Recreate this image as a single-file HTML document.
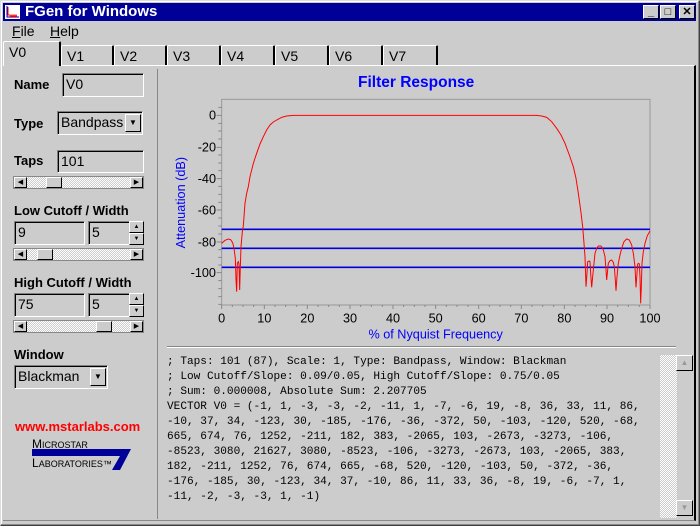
<!DOCTYPE html>
<html><head><style>
*{margin:0;padding:0;box-sizing:border-box}
body{width:700px;height:526px;background:#cccccc;position:relative;overflow:hidden;font-family:"Liberation Sans",sans-serif;font-size:13px;color:#000}
.a{position:absolute}
.win{left:0;top:0;width:700px;height:526px;border:1px solid #ddd;border-right-color:#404040;border-bottom-color:#404040;box-shadow:inset -1px -1px 0 #888,inset 1px 1px 0 #fff}
.title{left:3px;top:3px;width:693px;height:18px;background:#000099;color:#fff;font-weight:bold;font-size:15px;line-height:18px;padding-left:22px}
.tb{top:5px;width:16px;height:14px;background:#ccc;border:1px solid #fff;border-right-color:#000;border-bottom-color:#000;font-size:11px;line-height:12px;text-align:center;font-weight:bold}
.sunk{border:1px solid #808080;border-right-color:#fff;border-bottom-color:#fff;box-shadow:inset 1px 1px 0 #000;background:#ccc;padding-left:3px;line-height:21px;font-size:14px}
.lbl{font-weight:bold;font-size:13px}
.tab{top:45px;height:21px;border:1px solid #fff;border-bottom:none;border-right:2px solid #000;border-radius:2px 2px 0 0;padding-left:5px;line-height:20px;font-size:14px}
.sb{height:13px;background:repeating-conic-gradient(#fff 0 25%,#ccc 0 50%) 0 0/2px 2px;border:1px solid #888}
.sbb{top:0;width:13px;height:11px;background:#ccc;border:1px solid #fff;border-right-color:#000;border-bottom-color:#000;font-size:7px;line-height:9px;text-align:center}
.drop{width:16px;height:18px;background:#ccc;border:1px solid #fff;border-right-color:#000;border-bottom-color:#000;font-size:8px;text-align:center;line-height:16px}
.mono{font-family:"Liberation Mono",monospace;font-size:11.1px;line-height:15px;white-space:pre}
</style></head><body>
<div class="a win"></div>
<div class="a title">FGen for Windows</div>
<svg class="a" style="left:5px;top:5px" width="15" height="14"><rect width="15" height="14" fill="#fff"/><path d="M2 1V12H14" stroke="#000099" fill="none"/><path d="M3 2V10H5L6 12L7 10L8 12L9 10L10 12L11 10L12 12" stroke="red" fill="none"/></svg>
<div class="a tb" style="left:643px">_</div>
<div class="a tb" style="left:660px">□</div>
<div class="a tb" style="left:679px">✕</div>
<div class="a" style="left:12px;top:23px;font-size:14px"><u>F</u>ile</div>
<div class="a" style="left:50px;top:23px;font-size:14px"><u>H</u>elp</div>
<div class="a tab" style="left:3px;top:41px;width:58px;height:25px;background:#ccc;z-index:2">V0</div>
<div class="a tab" style="left:61px;width:53px">V1</div>
<div class="a tab" style="left:114px;width:53px">V2</div>
<div class="a tab" style="left:167px;width:54px">V3</div>
<div class="a tab" style="left:221px;width:54px">V4</div>
<div class="a tab" style="left:275px;width:54px">V5</div>
<div class="a tab" style="left:329px;width:54px">V6</div>
<div class="a tab" style="left:383px;width:55px">V7</div>
<div class="a" style="left:3px;top:65px;width:693px;height:456px;border-top:1px solid #fff;border-right:2px solid #000;border-bottom:1px solid #888"></div>
<div class="a" style="left:157px;top:69px;width:1px;height:450px;background:#fff;border-left:1px solid #888"></div>

<div class="a lbl" style="left:14px;top:77px">Name</div>
<div class="a sunk" style="left:62px;top:73px;width:82px;height:24px">V0</div>
<div class="a lbl" style="left:14px;top:116px">Type</div>
<div class="a sunk" style="left:57px;top:111px;width:86px;height:24px">Bandpass</div>
<div class="a drop" style="left:125px;top:114px">▼</div>
<div class="a lbl" style="left:14px;top:153px">Taps</div>
<div class="a sunk" style="left:57px;top:150px;width:87px;height:23px">101</div>
<div class="a sb" style="left:13px;top:176px;width:131px"><div class="a sbb" style="left:0">◀</div><div class="a sbb" style="left:32px;width:16px"></div><div class="a sbb" style="right:0">▶</div></div>

<div class="a lbl" style="left:14px;top:203px">Low Cutoff / Width</div>
<div class="a sunk" style="left:14px;top:221px;width:71px;height:24px">9</div>
<div class="a sunk" style="left:88px;top:221px;width:42px;height:24px">5</div>
<div class="a drop" style="left:129px;top:221px;width:15px;height:12px;font-size:6px;line-height:10px">▲</div>
<div class="a drop" style="left:129px;top:233px;width:15px;height:12px;font-size:6px;line-height:10px">▼</div>
<div class="a sb" style="left:13px;top:248px;width:131px"><div class="a sbb" style="left:0">◀</div><div class="a sbb" style="left:23px;width:16px"></div><div class="a sbb" style="right:0">▶</div></div>

<div class="a lbl" style="left:14px;top:275px">High Cutoff / Width</div>
<div class="a sunk" style="left:14px;top:293px;width:71px;height:24px">75</div>
<div class="a sunk" style="left:88px;top:293px;width:42px;height:24px">5</div>
<div class="a drop" style="left:129px;top:293px;width:15px;height:12px;font-size:6px;line-height:10px">▲</div>
<div class="a drop" style="left:129px;top:305px;width:15px;height:12px;font-size:6px;line-height:10px">▼</div>
<div class="a sb" style="left:13px;top:320px;width:131px"><div class="a sbb" style="left:0">◀</div><div class="a sbb" style="left:82px;width:16px"></div><div class="a sbb" style="right:0">▶</div></div>

<div class="a lbl" style="left:14px;top:347px">Window</div>
<div class="a sunk" style="left:14px;top:365px;width:94px;height:24px">Blackman</div>
<div class="a drop" style="left:90px;top:368px">▼</div>

<div class="a" style="left:15px;top:419px;color:#ff0000;font-weight:bold;font-size:13px">www.mstarlabs.com</div>
<div class="a" style="left:32px;top:437px;font-family:'Liberation Sans',sans-serif;font-size:12px;color:#000">M<span style="font-size:9px">ICROSTAR</span></div>
<svg class="a" style="left:32px;top:449px" width="100" height="22"><path d="M0 0H99L88 21H80L88 7H0Z" fill="#000099"/></svg>
<div class="a" style="left:32px;top:456px;font-family:'Liberation Sans',sans-serif;font-size:12px">L<span style="font-size:9px">ABORATORIES™</span></div>

<div class="a" style="left:358px;top:74px;color:#0000ff;font-weight:bold;font-size:15.5px">Filter Response</div>
<svg class="a" style="left:0;top:0" width="700" height="526">
<g transform="translate(160,60) scale(0.33333)" font-family="Liberation Sans,sans-serif" font-size="38">
<rect x="185" y="118" width="1285" height="617" fill="none" stroke="#999" stroke-width="3"/>
<g stroke="#888" stroke-width="3">
<path d="M170 166H185M170 262H185M170 356H185M170 450H185M170 546H185M170 638H185M175 213H185M175 309H185M175 403H185M175 498H185M175 592H185M175 686H185M175 733H185M175 142H185M175 190H185M175 237H185M175 285H185M175 332H185M175 379H185M175 427H185M175 474H185M175 522H185M175 569H185M175 615H185M175 662H185M175 710H185"/>
<path d="M185 735v12M313 735v12M442 735v12M570 735v12M699 735v12M827 735v12M956 735v12M1084 735v12M1213 735v12M1341 735v12M1470 735v12"/>
<path d="M217 735v6M249 735v6M281 735v6M345 735v6M377 735v6M410 735v6M474 735v6M506 735v6M538 735v6M602 735v6M634 735v6M667 735v6M731 735v6M763 735v6M795 735v6M859 735v6M891 735v6M924 735v6M988 735v6M1020 735v6M1052 735v6M1116 735v6M1148 735v6M1181 735v6M1245 735v6M1277 735v6M1309 735v6M1373 735v6M1405 735v6M1438 735v6"/>
</g>
<g fill="#000" text-anchor="end"><text x="168" y="179">0</text><text x="168" y="275">-20</text><text x="168" y="369">-40</text><text x="168" y="463">-60</text><text x="168" y="559">-80</text><text x="168" y="651">-100</text></g>
<g fill="#000" text-anchor="middle"><text x="185" y="787">0</text><text x="313" y="787">10</text><text x="442" y="787">20</text><text x="570" y="787">30</text><text x="699" y="787">40</text><text x="827" y="787">50</text><text x="956" y="787">60</text><text x="1084" y="787">70</text><text x="1213" y="787">80</text><text x="1341" y="787">90</text><text x="1470" y="787">100</text></g>
<text x="827" y="835" fill="#0000ff" text-anchor="middle">% of Nyquist Frequency</text>
<text transform="translate(75,428) rotate(-90)" fill="#0000ff" text-anchor="middle">Attenuation (dB)</text>
<path d="M185 508H1470M185 565H1470M185 622H1470" stroke="#0000dd" stroke-width="5"/>
<polyline fill="none" stroke="red" stroke-width="3" points="185,550 195,541 205,537 212,539 218,548 222,565 226,595 228,660 230,695 232,610 235,605 237,612 239,690 241,620 243,560 247,515 250,497 255,430 260,400 265,380 270,350 280,310 290,280 300,252 310,230 320,210 330,195 340,186 350,180 365,172 380,168 400,166 1130,166 1145,168 1160,172 1175,185 1190,205 1203,225 1215,250 1228,285 1240,320 1248,355 1255,400 1262,450 1268,500 1272,550 1275,590 1278,680 1281,640 1283,605 1288,603 1290,605 1292,640 1295,682 1298,650 1300,630 1305,580 1310,565 1315,558 1322,558 1325,560 1330,570 1335,590 1338,630 1340,660 1343,630 1345,610 1350,602 1355,600 1360,607 1363,620 1366,660 1368,692 1371,650 1375,610 1380,585 1385,565 1392,545 1400,537 1408,540 1415,555 1420,580 1425,620 1428,682 1431,640 1433,612 1436,610 1438,612 1440,650 1442,730 1444,680 1446,610 1450,575 1455,550 1462,527 1470,513"/>
</g>
<path d="M167 346.5H676" stroke="#888"/><path d="M167 347.5H676" stroke="#fff"/>
</svg>

<div class="a mono" style="left:167px;top:355px">; Taps: 101 (87), Scale: 1, Type: Bandpass, Window: Blackman
; Low Cutoff/Slope: 0.09/0.05, High Cutoff/Slope: 0.75/0.05
; Sum: 0.000008, Absolute Sum: 2.207705
VECTOR V0 = (-1, 1, -3, -3, -2, -11, 1, -7, -6, 19, -8, 36, 33, 11, 86,
-10, 37, 34, -123, 30, -185, -176, -36, -372, 50, -103, -120, 520, -68,
665, 674, 76, 1252, -211, 182, 383, -2065, 103, -2673, -3273, -106,
-8523, 3080, 21627, 3080, -8523, -106, -3273, -2673, 103, -2065, 383,
182, -211, 1252, 76, 674, 665, -68, 520, -120, -103, 50, -372, -36,
-176, -185, 30, -123, 34, 37, -10, 86, 11, 33, 36, -8, 19, -6, -7, 1,
-11, -2, -3, -3, 1, -1)</div>
<div class="a" style="left:660px;top:355px;width:17px;height:163px;background:repeating-conic-gradient(#fff 0 25%,#ccc 0 50%) 0 0/2px 2px"></div>
<div class="a sbb" style="left:676px;top:355px;width:17px;height:16px;color:#999;font-size:8px;line-height:14px">▲</div>
<div class="a sbb" style="left:676px;top:500px;width:17px;height:16px;color:#999;font-size:8px;line-height:14px">▼</div>
</body></html>
